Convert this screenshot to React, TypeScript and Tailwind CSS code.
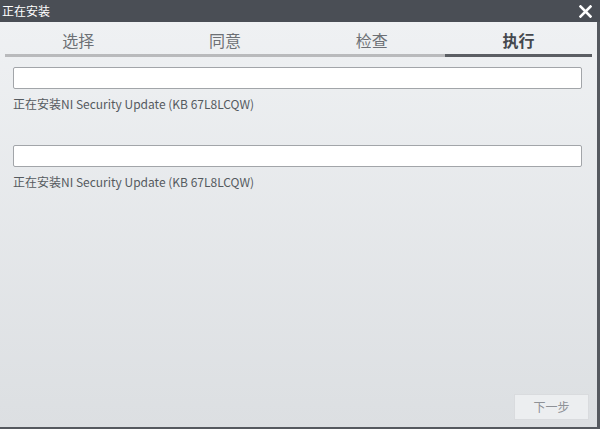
import React from "react";

const tabs = ["选择", "同意", "检查", "执行"];

export default function App() {
  return (
    <div
      className="w-[600px] h-[429px] flex flex-col overflow-hidden"
      style={{ fontFamily: '"Noto Sans CJK SC", "Noto Sans", sans-serif' }}
    >
      <div className="h-[22px] shrink-0 bg-[#4a4e55] flex items-center justify-between pl-[2px] pr-[8px]">
        <span className="text-white text-[12px] leading-none">正在安装</span>
        <svg width="13" height="13" viewBox="0 0 13 13">
          <path d="M1.5 1.5 L11.5 11.5 M11.5 1.5 L1.5 11.5" stroke="#ffffff" strokeWidth="2.6" strokeLinecap="square" />
        </svg>
      </div>
      <div className="flex-1 flex flex-col bg-gradient-to-b from-[#eff1f3] to-[#dcdfe2] border-r-[3px] border-b-2 border-[#55595f]">
        <div className="mx-[5px] grid grid-cols-4 h-[35px]">
          {tabs.map((t, i) => (
            <div
              key={t}
              className={`flex items-center justify-center border-b-[3px] text-[16px] leading-none ${
                i === 3
                  ? "border-[#5b5e63] text-[#45484d] font-bold"
                  : "border-[#b9babc] text-[#6d7075]"
              }`}
            >
              <span className="mt-[4px]">{t}</span>
            </div>
          ))}
        </div>
        <div className="px-[13px] pr-[15px] flex flex-col">
          <div className="mt-[10px] h-[22px] bg-white border border-[#a2a5a9] rounded-[2px]" />
          <div className="mt-[7px] text-[12px] text-[#555a5f] leading-[16px]">
            正在安装NI Security Update (KB 67L8LCQW)
          </div>
          <div className="mt-[33px] h-[22px] bg-white border border-[#a2a5a9] rounded-[2px]" />
          <div className="mt-[7px] text-[12px] text-[#555a5f] leading-[16px]">
            正在安装NI Security Update (KB 67L8LCQW)
          </div>
        </div>
        <div className="flex-1" />
        <div className="flex justify-end pr-[8px] pb-[7px]">
          <div className="w-[75px] h-[26px] bg-[#eceef0] border border-[#d9dbde] flex items-center justify-center text-[12px] text-[#8e9196]">
            下一步
          </div>
        </div>
      </div>
    </div>
  );
}
